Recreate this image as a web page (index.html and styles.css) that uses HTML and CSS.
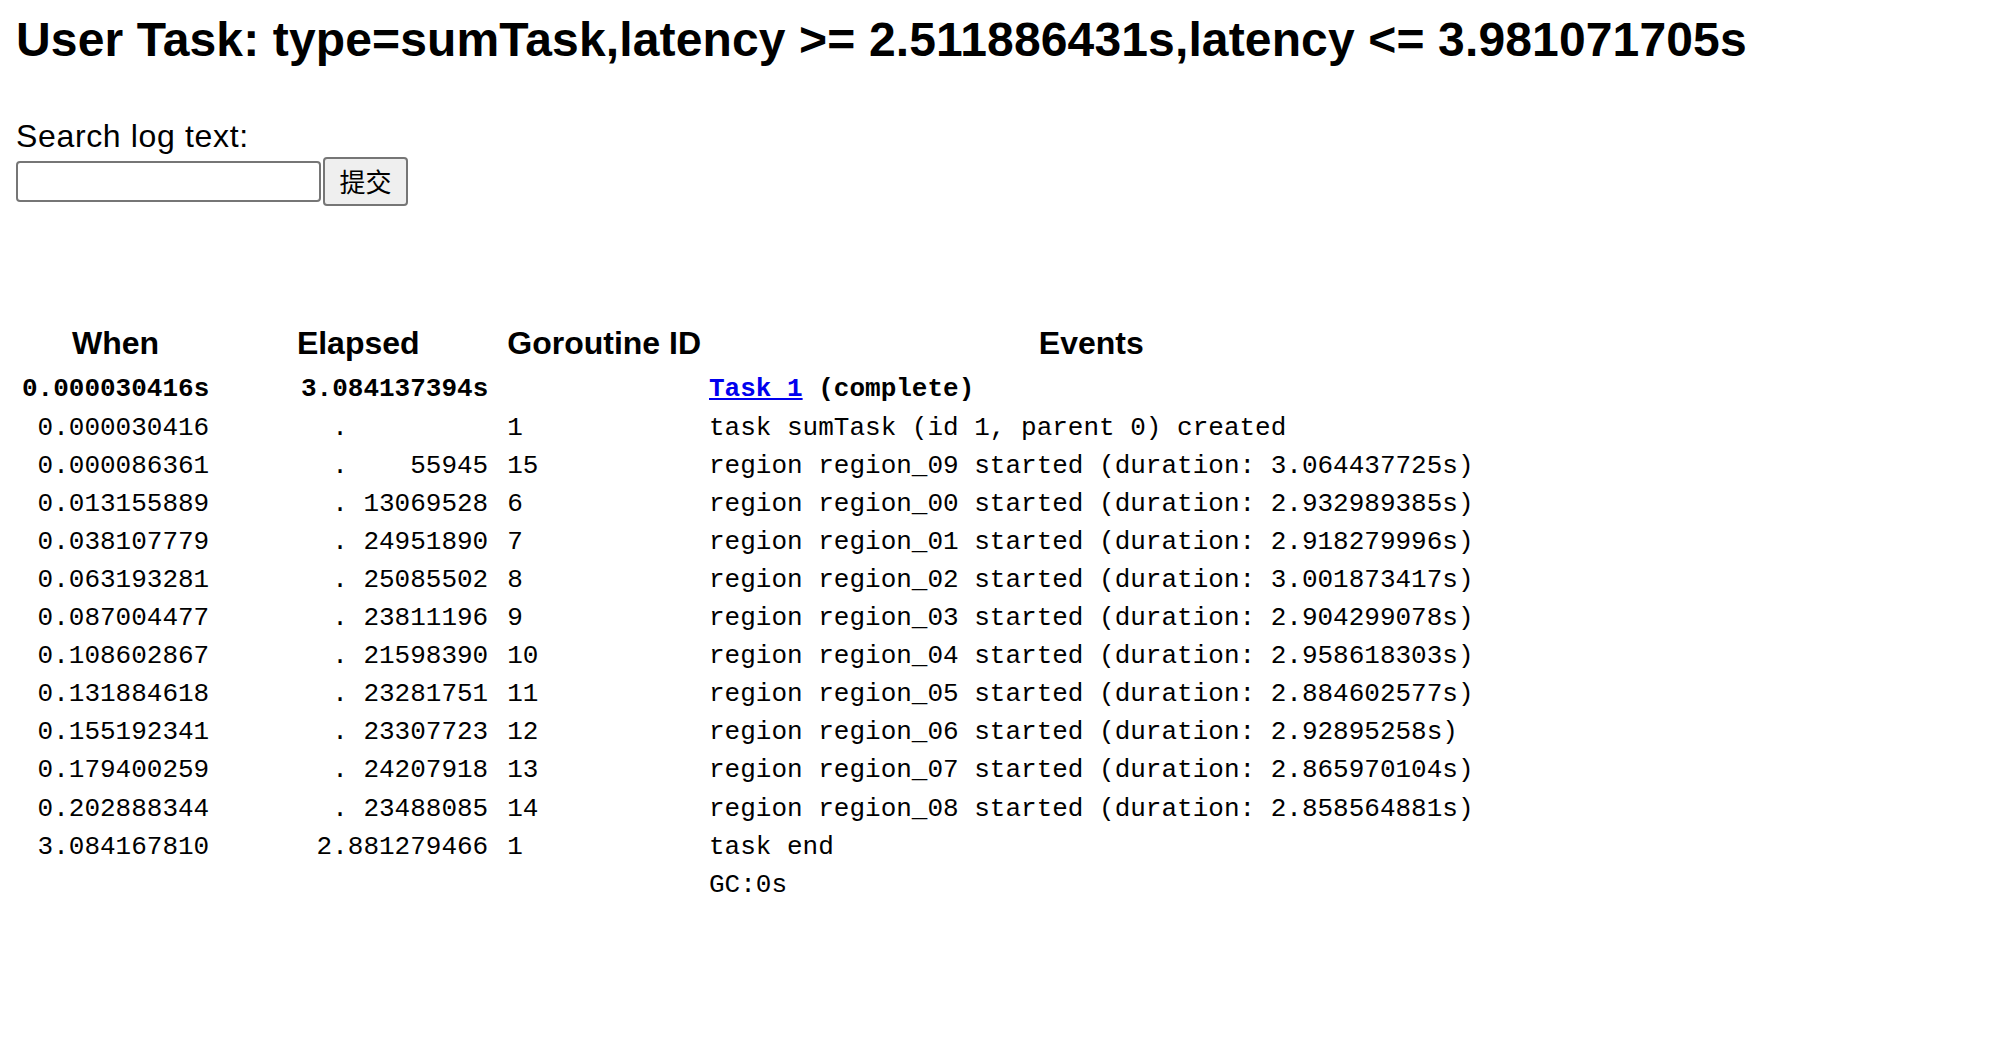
FILE: index.html
```html
<!DOCTYPE html>
<html>
<head>
<meta charset="utf-8">
<title>User Task: type=sumTask,latency &gt;= 2.511886431s,latency &lt;= 3.981071705s</title>
<link rel="stylesheet" href="styles.css">
</head>
<body>
<h2 class="title">User Task: type=sumTask,latency &gt;= 2.511886431s,latency &lt;= 3.981071705s</h2>

<div class="search-label">Search log text:</div>
<form class="search-form" onsubmit="return false">
<input class="search-input" type="text" name="logtext" id="logtextinput"><button class="search-button" type="submit">提交</button>
</form>

<table class="reqs">
<tr><th class="hd">When</th><th class="hd">Elapsed</th><th class="hd">Goroutine ID</th><th class="hd">Events</th></tr>
<tr class="first"><td class="when">0.000030416s</td><td class="elapsed">3.084137394s</td><td class="goid"></td><td class="ev"><a class="task-link" href="#">Task 1</a> (complete)</td></tr>
<tr><td class="when">0.000030416</td><td class="elapsed"> .         </td><td class="goid">1</td><td class="ev">task sumTask (id 1, parent 0) created</td></tr>
<tr><td class="when">0.000086361</td><td class="elapsed"> .    55945</td><td class="goid">15</td><td class="ev">region region_09 started (duration: 3.064437725s)</td></tr>
<tr><td class="when">0.013155889</td><td class="elapsed"> . 13069528</td><td class="goid">6</td><td class="ev">region region_00 started (duration: 2.932989385s)</td></tr>
<tr><td class="when">0.038107779</td><td class="elapsed"> . 24951890</td><td class="goid">7</td><td class="ev">region region_01 started (duration: 2.918279996s)</td></tr>
<tr><td class="when">0.063193281</td><td class="elapsed"> . 25085502</td><td class="goid">8</td><td class="ev">region region_02 started (duration: 3.001873417s)</td></tr>
<tr><td class="when">0.087004477</td><td class="elapsed"> . 23811196</td><td class="goid">9</td><td class="ev">region region_03 started (duration: 2.904299078s)</td></tr>
<tr><td class="when">0.108602867</td><td class="elapsed"> . 21598390</td><td class="goid">10</td><td class="ev">region region_04 started (duration: 2.958618303s)</td></tr>
<tr><td class="when">0.131884618</td><td class="elapsed"> . 23281751</td><td class="goid">11</td><td class="ev">region region_05 started (duration: 2.884602577s)</td></tr>
<tr><td class="when">0.155192341</td><td class="elapsed"> . 23307723</td><td class="goid">12</td><td class="ev">region region_06 started (duration: 2.92895258s)</td></tr>
<tr><td class="when">0.179400259</td><td class="elapsed"> . 24207918</td><td class="goid">13</td><td class="ev">region region_07 started (duration: 2.865970104s)</td></tr>
<tr><td class="when">0.202888344</td><td class="elapsed"> . 23488085</td><td class="goid">14</td><td class="ev">region region_08 started (duration: 2.858564881s)</td></tr>
<tr><td class="when">3.084167810</td><td class="elapsed">2.881279466</td><td class="goid">1</td><td class="ev">task end</td></tr>
<tr><td class="when"></td><td class="elapsed"></td><td class="goid"></td><td class="ev">GC:0s</td></tr>
</table>
</body>
</html>
```

FILE: styles.css
```css
html {
  background: #ffffff;
}

body {
  margin: 16px;
  font-family: "Liberation Sans", Arial, Helvetica, sans-serif;
  color: #000000;
}

.title {
  font-size: 48px;
  font-weight: bold;
  line-height: 48px;
  letter-spacing: 0.14px;
  margin: 0 0 55.6px 0;
}

.search-label {
  font-size: 32px;
  line-height: 32px;
  letter-spacing: 0.65px;
}

.search-form {
  display: flex;
  align-items: flex-start;
  gap: 2px;
  margin: 5px 0 0 0;
}

.search-input {
  box-sizing: border-box;
  width: 305px;
  height: 41px;
  margin: 4px 0 0 0;
  padding: 2px 4px;
  border: 2px solid #767676;
  border-radius: 4px;
  background: #ffffff;
  font-size: 26px;
  outline: none;
}

.search-button {
  box-sizing: border-box;
  width: 85px;
  height: 49px;
  margin: 0;
  padding: 0;
  border: 2px solid #767676;
  border-radius: 4px;
  background: #efefef;
  color: #000000;
  font-family: "Noto Sans CJK SC", "Noto Sans CJK JP", sans-serif;
  font-size: 26px;
  line-height: 1;
}

.reqs {
  margin-top: 110.4px;
  border-collapse: separate;
  border-spacing: 4px;
}

.hd {
  font-family: "Liberation Sans", Arial, Helvetica, sans-serif;
  font-size: 32px;
  font-weight: bold;
  line-height: 42px;
  padding: 2px 2px 4.5px 2px;
  text-align: center;
  vertical-align: top;
}

.reqs td {
  font-family: "Liberation Mono", "Courier New", monospace;
  font-size: 26px;
  line-height: 30.1px;
  padding: 2px;
  vertical-align: middle;
  white-space: nowrap;
}

.reqs td.when {
  text-align: right;
}

.reqs td.elapsed {
  padding: 0 13px;
  width: 260px;
  text-align: right;
  white-space: pre;
}

.reqs tr.first td {
  font-weight: bold;
}

.task-link {
  color: #0000ee;
  text-decoration: underline;
}
```
